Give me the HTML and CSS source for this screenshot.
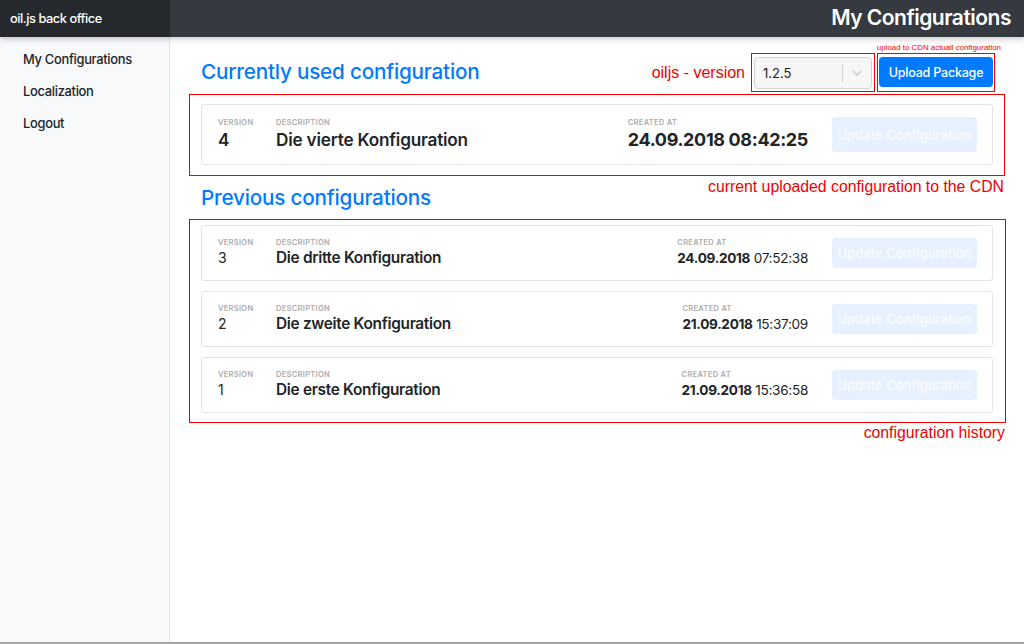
FILE: index.html
```html
<!DOCTYPE html>
<html lang="en">
<head>
<meta charset="utf-8">
<title>oil.js back office</title>
<link rel="stylesheet" href="styles.css">
</head>
<body>
<div class="app">
  <header class="topbar">
    <div class="brand">oil.js back office</div>
    <div class="page-title">My Configurations</div>
  </header>
  <div class="layout">
    <nav class="sidebar">
      <a class="nav-item">My Configurations</a>
      <a class="nav-item">Localization</a>
      <a class="nav-item">Logout</a>
    </nav>
    <main class="main">
      <div class="top-row">
        <h2 class="section-title section-current">Currently used configuration</h2>
        <div class="controls">
          <span class="note note-lg">oiljs - version</span>
          <div class="mark mark-select">
            <div class="select">
              <span class="select-value">1.2.5</span>
              <span class="select-sep"></span>
              <svg class="select-chevron" width="10" height="6" viewBox="0 0 10 6"><polyline points="1,1 5,5 9,1" fill="none" stroke="#c8c8c8" stroke-width="1.3"/></svg>
            </div>
          </div>
          <div class="mark mark-btn">
            <span class="note note-xs">upload to CDN actuall configuration</span>
            <button class="btn-primary">Upload Package</button>
          </div>
        </div>
      </div>

      <div class="mark mark-current">
        <div class="card card-current">
          <div class="col col-version">
            <span class="label">Version</span>
            <span class="value">4</span>
          </div>
          <div class="col col-desc">
            <span class="label">Description</span>
            <span class="value">Die vierte Konfiguration</span>
          </div>
          <div class="col col-created">
            <span class="label">Created at</span>
            <span class="value">24.09.2018 08:42:25</span>
          </div>
          <button class="btn-update" disabled>Update Configuration</button>
        </div>
        <span class="note note-md note-below">current uploaded configuration to the CDN</span>
      </div>

      <h2 class="section-title section-prev">Previous configurations</h2>

      <div class="mark mark-history">
        <div class="card card-history">
          <div class="col col-version">
            <span class="label">Version</span>
            <span class="value">3</span>
          </div>
          <div class="col col-desc">
            <span class="label">Description</span>
            <span class="value">Die dritte Konfiguration</span>
          </div>
          <div class="col col-created">
            <span class="label">Created at</span>
            <span class="value"><b>24.09.2018</b> 07:52:38</span>
          </div>
          <button class="btn-update" disabled>Update Configuration</button>
        </div>
        <div class="card card-history">
          <div class="col col-version">
            <span class="label">Version</span>
            <span class="value">2</span>
          </div>
          <div class="col col-desc">
            <span class="label">Description</span>
            <span class="value">Die zweite Konfiguration</span>
          </div>
          <div class="col col-created">
            <span class="label">Created at</span>
            <span class="value"><b>21.09.2018</b> 15:37:09</span>
          </div>
          <button class="btn-update" disabled>Update Configuration</button>
        </div>
        <div class="card card-history">
          <div class="col col-version">
            <span class="label">Version</span>
            <span class="value">1</span>
          </div>
          <div class="col col-desc">
            <span class="label">Description</span>
            <span class="value">Die erste Konfiguration</span>
          </div>
          <div class="col col-created">
            <span class="label">Created at</span>
            <span class="value"><b>21.09.2018</b> 15:36:58</span>
          </div>
          <button class="btn-update" disabled>Update Configuration</button>
        </div>
        <span class="note note-md note-below">configuration history</span>
      </div>
    </main>
  </div>
  <div class="bottom-edge"></div>
</div>
</body>
</html>
```

FILE: styles.css
```css
* { box-sizing: border-box; }

html, body {
  margin: 0;
  padding: 0;
  height: 100%;
}

body {
  font-family: Inter, "Noto Sans", "Liberation Sans", sans-serif;
  color: #212529;
  background: #fff;
}

.app {
  height: 644px;
  display: flex;
  flex-direction: column;
  overflow: hidden;
}

/* top bar */
.topbar {
  height: 37px;
  flex: 0 0 37px;
  display: flex;
  align-items: stretch;
  background: #343a40;
  box-shadow: 0 2px 6px rgba(0, 0, 0, 0.22);
  position: relative;
  z-index: 2;
}

.brand {
  width: 170px;
  background: #25292d;
  color: #fff;
  font-size: 12.8px;
  font-weight: 500;
  display: flex;
  align-items: center;
  padding-left: 10px;
  letter-spacing: -0.45px;
}

.page-title {
  flex: 1;
  display: flex;
  align-items: center;
  justify-content: flex-end;
  padding-right: 13px;
  padding-bottom: 3px;
  color: #fff;
  font-size: 21px;
  font-weight: 600;
  letter-spacing: -0.5px;
}

/* body layout */
.layout {
  flex: 1;
  display: flex;
  min-height: 0;
}

.sidebar {
  width: 170px;
  flex: 0 0 170px;
  background: #f8f9fa;
  border-right: 1px solid #e4e5e6;
  padding-top: 7px;
  display: flex;
  flex-direction: column;
}

.nav-item {
  display: block;
  height: 32px;
  line-height: 32px;
  padding-left: 23px;
  font-size: 12.9px;
  font-weight: 500;
  color: #212529;
  letter-spacing: -0.3px;
}

.main {
  flex: 1;
  padding: 16px 19px 0 19px;
  display: flex;
  flex-direction: column;
}

.bottom-edge {
  height: 2px;
  flex: 0 0 2px;
  background: #a3a3a3;
}

/* headings */
.top-row {
  display: flex;
  align-items: center;
  justify-content: space-between;
  padding: 0 10px 0 12px;
  height: 39px;
}

.section-title {
  margin: 0;
  font-size: 20.7px;
  line-height: 26px;
  font-weight: 500;
  color: #007bff;
  letter-spacing: -0.2px;
}

.section-current {
  padding-bottom: 2px;
}

.section-prev {
  padding-left: 12px;
  margin: 9px 0 8px;
}

/* controls */
.controls {
  display: flex;
  align-items: stretch;
  height: 39px;
}

.note {
  font-family: "Liberation Sans", Arial, sans-serif;
  color: #f00000;
  white-space: nowrap;
}

.note-lg {
  font-size: 16px;
  align-self: center;
  margin-right: 6px;
}

.note-md {
  font-size: 15.8px;
  line-height: 16px;
}

.note-xs {
  position: absolute;
  right: -7px;
  bottom: calc(100% + 2px);
  font-size: 7.9px;
  line-height: 9px;
}

.note-below {
  position: absolute;
  right: 0;
  top: calc(100% + 3px);
}

.mark-current .note-below {
  top: calc(100% + 4px);
}

.mark {
  border: 1px solid #f20000;
  position: relative;
}

.mark-select {
  padding: 3px 2px 2px 2px;
  margin-right: 2px;
}

.mark-btn {
  padding: 3px 1px 4px 1px;
}

.select {
  width: 118px;
  height: 32px;
  border: 1px solid #d3d3d3;
  border-radius: 4px;
  background: #f6f6f6;
  display: flex;
  align-items: center;
  padding-left: 8px;
}

.select-value {
  flex: 1;
  font-size: 13px;
  color: #222;
}

.select-sep {
  width: 1px;
  height: 18px;
  background: #d3d3d3;
}

.select-chevron {
  margin: 0 9px 0 9px;
}

.btn-primary {
  width: 114px;
  height: 30px;
  border: none;
  border-radius: 4px;
  background: #007bff;
  color: #fff;
  font-family: Inter, "Noto Sans", sans-serif;
  font-size: 12.5px;
  font-weight: 500;
  letter-spacing: -0.2px;
  padding: 0;
}

/* configuration cards */
.mark-current {
  margin-top: 2px;
  padding: 9px 11px 10px 11px;
}

.mark-history {
  padding: 5px 11px 9px 11px;
  display: flex;
  flex-direction: column;
  gap: 10px;
  margin-right: -1px;
}

.mark-history .card {
  margin-right: 1px;
}

.card {
  display: flex;
  align-items: center;
  border: 1px solid #e4e4e4;
  border-radius: 3px;
  padding: 0 15px 0 16px;
  background: #fff;
}

.card-current { height: 61px; }
.card-history { height: 56px; }

.col {
  display: flex;
  flex-direction: column;
}

.col-version { width: 58px; }
.col-desc { flex: 1; }
.col-created { margin-right: 24px; }

.label {
  font-size: 7.5px;
  line-height: 10px;
  font-weight: 600;
  text-transform: uppercase;
  letter-spacing: 0.3px;
  color: #ababab;
}

.card-current .value {
  font-size: 17.2px;
  line-height: 24px;
  font-weight: 600;
  color: #212529;
  letter-spacing: -0.2px;
}

.card-current .col-created .value {
  font-size: 18px;
  font-weight: 700;
  letter-spacing: -0.35px;
}

.card-history .value {
  font-size: 14px;
  line-height: 20px;
  color: #212529;
}

.card-history .col-desc .value {
  font-size: 15.4px;
  font-weight: 600;
  letter-spacing: -0.3px;
}

.card-history .col-created .value {
  font-size: 13.6px;
  letter-spacing: -0.3px;
}

.card-history .col-created .value b {
  font-weight: 700;
}

.btn-update {
  width: 145px;
  border: none;
  border-radius: 4px;
  background: #e6f0fe;
  color: #fbfdff;
  font-family: Inter, "Noto Sans", sans-serif;
  font-size: 13px;
  font-weight: 500;
  padding: 0;
}

.card-current .btn-update { height: 35px; }
.card-history .btn-update { height: 30px; }
```
